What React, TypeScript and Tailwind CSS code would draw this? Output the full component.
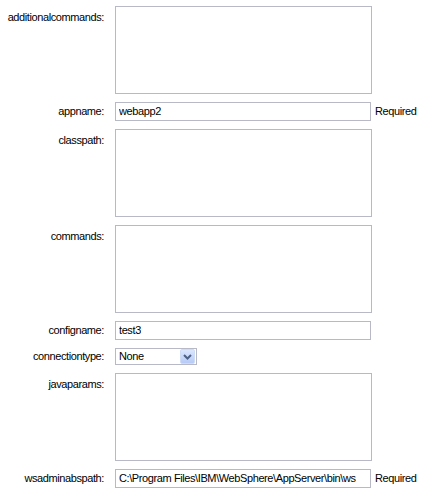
import React from "react";

const border = "border border-[#b7bac6]";

function Label({ text, top }: { text: string; top?: boolean }) {
  return (
    <div
      className={
        "w-[104px] shrink-0 text-right whitespace-nowrap " + (top ? "pt-[5px]" : "")
      }
    >
      {text}
    </div>
  );
}

function AreaRow({ label }: { label: string }) {
  return (
    <div className="flex items-start">
      <Label text={label} top />
      <div className={"ml-[11px] w-[257px] h-[88px] shrink-0 bg-white " + border} />
    </div>
  );
}

function InputRow({
  label,
  value,
  required,
}: {
  label: string;
  value: string;
  required?: boolean;
}) {
  return (
    <div className="flex items-center">
      <Label text={label} />
      <div
        className={
          "ml-[11px] w-[256px] h-[19px] shrink-0 flex items-center px-[3px] overflow-hidden whitespace-nowrap bg-white " +
          border
        }
      >
        <span className="block overflow-hidden">{value}</span>
      </div>
      {required && <div className="ml-[4px] whitespace-nowrap">Required</div>}
    </div>
  );
}

function SelectRow({ label, value }: { label: string; value: string }) {
  return (
    <div className="flex items-center">
      <Label text={label} />
      <div
        className={
          "ml-[11px] w-[82px] h-[17px] shrink-0 flex items-center pl-[3px] pr-px bg-white " + border
        }
      >
        <span className="flex-1">{value}</span>
        <div className="w-[15px] h-[15px] flex items-center justify-center rounded-[2px] border border-[#cfdcf8] bg-gradient-to-b from-[#dbe6fd] to-[#b7cbf7]">
          <svg width="9" height="6" viewBox="0 0 9 6">
            <path d="M1 1 L4.5 4.5 L8 1" fill="none" stroke="#4d6185" strokeWidth="2" />
          </svg>
        </div>
      </div>
    </div>
  );
}

export default function App() {
  return (
    <div className="bg-white w-[423px] h-[492px] pt-[6px] flex flex-col gap-2 font-['Liberation_Sans',Arial,sans-serif] text-[11px] leading-[13px] tracking-[-0.4px] text-black">
      <AreaRow label="additionalcommands:" />
      <InputRow label="appname:" value="webapp2" required />
      <AreaRow label="classpath:" />
      <AreaRow label="commands:" />
      <InputRow label="configname:" value="test3" />
      <SelectRow label="connectiontype:" value="None" />
      <AreaRow label="javaparams:" />
      <InputRow
        label="wsadminabspath:"
        value="C:\Program Files\IBM\WebSphere\AppServer\bin\ws"
        required
      />
    </div>
  );
}
